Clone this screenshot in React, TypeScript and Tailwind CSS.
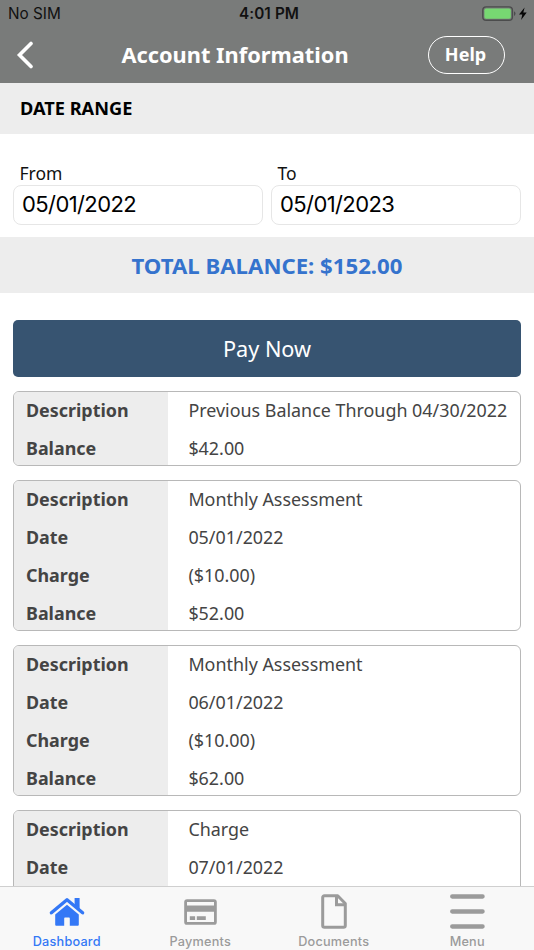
import { clsx } from 'clsx';
import type { ReactNode } from 'react';

interface Field {
  label: string;
  value: string;
}

const transactions: Field[][] = [
  [
    { label: 'Description', value: 'Previous Balance Through 04/30/2022' },
    { label: 'Balance', value: '$42.00' },
  ],
  [
    { label: 'Description', value: 'Monthly Assessment' },
    { label: 'Date', value: '05/01/2022' },
    { label: 'Charge', value: '($10.00)' },
    { label: 'Balance', value: '$52.00' },
  ],
  [
    { label: 'Description', value: 'Monthly Assessment' },
    { label: 'Date', value: '06/01/2022' },
    { label: 'Charge', value: '($10.00)' },
    { label: 'Balance', value: '$62.00' },
  ],
  [
    { label: 'Description', value: 'Charge' },
    { label: 'Date', value: '07/01/2022' },
  ],
];

const HomeIcon = () => (
  <svg width="36" height="30" viewBox="0 0 36 30" fill="currentColor">
    <path d="M2.4 15.8 18 2.8l15.6 13" fill="none" stroke="currentColor" strokeWidth="3.4" strokeLinecap="round" strokeLinejoin="round" />
    <path d="M25.6 1h5v11l-5-4.2z" />
    <path d="M18 7.8 6.2 17.6v10.2q0 1 1 1h8v-7.4q0-.8.8-.8h4q.8 0 .8.8v7.4h8q1 0 1-1V17.6z" />
  </svg>
);

const CardIcon = () => (
  <svg width="33" height="26" viewBox="0 0 33 26" fill="none">
    <rect x="1.6" y="1.6" width="29.8" height="22.8" rx="1.5" stroke="currentColor" strokeWidth="2.8" />
    <path d="M1 6.5h31v6.3H1zM5.8 17.3h5.3V21H5.8zM12.8 17.3h9V21h-9z" fill="currentColor" />
  </svg>
);

const DocumentIcon = () => (
  <svg width="26" height="35" viewBox="0 0 26 35" fill="none" stroke="currentColor" strokeWidth="3" strokeLinejoin="round">
    <path d="M3.5 1.8h13.2l7.6 7.7v22q0 1.7-1.8 1.7h-19q-1.8 0-1.8-1.7v-28q0-1.7 1.8-1.7z" />
    <path d="M15.5 2v8.7h8.5" strokeLinejoin="miter" />
  </svg>
);

const MenuIcon = () => (
  <svg width="35" height="35" viewBox="0 0 35 35" stroke="currentColor" strokeWidth="4.3" strokeLinecap="round">
    <path d="M2.2 2.5h30.4M2.2 17.5h30.4M2.2 32.5h30.4" />
  </svg>
);

const tabs: { name: string; icon: ReactNode }[] = [
  { name: 'Dashboard', icon: <HomeIcon /> },
  { name: 'Payments', icon: <CardIcon /> },
  { name: 'Documents', icon: <DocumentIcon /> },
  { name: 'Menu', icon: <MenuIcon /> },
];

const StatusBar = () => (
  <div className="grid h-7 grid-cols-3 items-center pr-1.5 pl-2 font-['Inter',sans-serif] text-[15.3px] text-[#111]">
    <span>No SIM</span>
    <span className="pl-0.5 text-center font-semibold tracking-[0.1px]">4:01 PM</span>
    <div className="flex items-center justify-end">
      <svg width="46" height="16" viewBox="0 0 46 16">
        <rect x="0.8" y="0.9" width="29.6" height="13.4" rx="3.4" fill="none" stroke="#4b4c4c" strokeWidth="1.4" />
        <rect x="2.4" y="2.4" width="26.4" height="10.4" rx="1.8" fill="#77d872" />
        <path d="M32 5.3q1.5.6 1.5 2.3T32 9.9z" fill="#4b4c4c" />
        <path d="M42.6 1.4 37 8.6h3.3l-1.2 5.5 5.6-7.6h-3.4z" fill="#050505" />
      </svg>
    </div>
  </div>
);

const Header = () => (
  <header className="h-[83px] shrink-0 bg-[#797b7a]">
    <StatusBar />
    <div className="flex h-[53px] items-center text-white">
      <button className="w-[42px] pl-4" aria-label="Back">
        <svg width="18" height="28" viewBox="0 0 18 28" fill="none" stroke="currentColor" strokeWidth="3.6" strokeLinecap="round" strokeLinejoin="miter">
          <path d="M15 2.5 3.5 14 15 25.5" />
        </svg>
      </button>
      <h1 className="flex-1 pt-px text-center text-[21.8px] font-bold">Account Information</h1>
      <button className="mr-[29px] flex h-[38px] w-[77px] items-center justify-center rounded-full border-[1.5px] border-white pr-0.5 text-[18px] font-bold">
        Help
      </button>
    </div>
  </header>
);

const DateField = ({ label, value }: { label: string; value: string }) => (
  <label className="flex-1">
    <span className="block pl-[6.5px] text-[17.5px] leading-6 text-[#111]">{label}</span>
    <div className="flex h-10 items-center rounded-lg border border-[#e6e6e6] pb-0.5 pl-2 font-['Inter',sans-serif] text-[22px] tracking-[-0.6px] text-black">
      {value}
    </div>
  </label>
);

const TransactionCard = ({ fields }: { fields: Field[] }) => (
  <div className="flex overflow-hidden rounded-md border border-[#b8b8b8] text-[17.9px] text-[#444] last:min-h-24">
    <div className="-mb-0.5 w-[154px] bg-[#ededed] pl-3 font-bold">
      {fields.map((field) => (
        <div key={field.label} className="h-[37.8px] leading-[37.8px]">{field.label}</div>
      ))}
    </div>
    <div className="-mb-0.5 pl-[20.4px] whitespace-nowrap">
      {fields.map((field) => (
        <div key={field.label} className="h-[37.8px] leading-[37.8px]">{field.value}</div>
      ))}
    </div>
  </div>
);

const TabBar = () => (
  <nav className="grid h-16 shrink-0 grid-cols-4 border-t border-[#cfcfcf] bg-[#f8f8f8] font-['Inter',sans-serif]">
    {tabs.map((tab, i) => (
      <button
        key={tab.name}
        className={clsx('flex flex-col items-center text-[12.7px] font-medium', i === 0 ? 'text-[#3478f6]' : 'text-[#9b9b9b]')}
      >
        <span className="flex h-[46px] items-center pt-[3px]">{tab.icon}</span>
        <span className="pt-px leading-4 tracking-[0.2px]">{tab.name}</span>
      </button>
    ))}
  </nav>
);

export default function App() {
  return (
    <div className="flex h-[950px] w-[534px] flex-col overflow-hidden bg-white font-['Noto_Sans',sans-serif]">
      <Header />
      <main className="min-h-0 flex-1 overflow-hidden">
        <h2 className="flex h-[51px] items-center bg-[#ededed] pl-5 text-[18.2px] font-bold text-black">DATE RANGE</h2>
        <div className="flex h-[103px] gap-2 px-[13px] pt-[27px]">
          <DateField label="From" value="05/01/2022" />
          <DateField label="To" value="05/01/2023" />
        </div>
        <div className="flex h-14 items-center justify-center bg-[#ededed] pt-0.5 text-[22.2px] font-bold text-[#3573cd]">
          TOTAL BALANCE: $152.00
        </div>
        <div className="flex flex-col gap-[13.8px] px-[13px] pt-[27px]">
          <button className="h-[57px] rounded-[5px] bg-[#375471] pt-0.5 text-[21.7px] text-white">Pay Now</button>
          {transactions.map((fields, i) => (
            <TransactionCard key={i} fields={fields} />
          ))}
        </div>
      </main>
      <TabBar />
    </div>
  );
}
